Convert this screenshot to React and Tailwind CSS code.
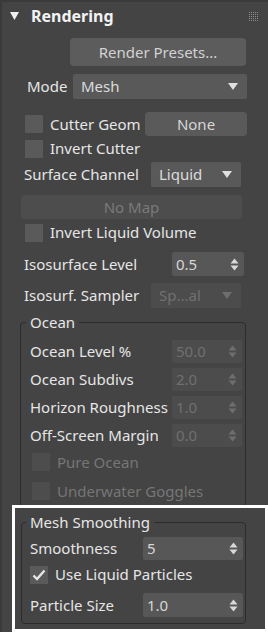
import React from "react";

const font = { fontFamily: '"Noto Sans", "Open Sans", sans-serif' };

function Checkbox({ checked, disabled }) {
  return (
    <div
      className={`w-[18px] h-[18px] shrink-0 flex items-center justify-center ${
        disabled ? "bg-[#4d4d4d]" : "bg-[#5a5a5a]"
      }`}
    >
      {checked && (
        <svg width="14" height="12" viewBox="0 0 14 12">
          <path d="M1.5 6.5 L5 10 L12.5 1.5" stroke="#e6e6e6" strokeWidth="2.4" fill="none" />
        </svg>
      )}
    </div>
  );
}

function Arrows({ disabled }) {
  const c = disabled ? "#6e6e6e" : "#d8d8d8";
  return (
    <svg width="9" height="13" viewBox="0 0 9 13" className="shrink-0">
      <polygon points="0.5,5.5 4.5,0.5 8.5,5.5" fill={c} />
      <polygon points="0.5,7.5 8.5,7.5 4.5,12.5" fill={c} />
    </svg>
  );
}

function Spinner({ value, disabled, className }) {
  return (
    <div
      className={`flex items-center justify-between pl-[4px] pr-[5px] rounded-[2px] ${
        disabled ? "bg-[#4c4c4c] text-[#707070]" : "bg-[#575757] text-[#d6d6d6]"
      } ${className}`}
    >
      <span className="text-[15px] leading-none">{value}</span>
      <Arrows disabled={disabled} />
    </div>
  );
}

function Dropdown({ value, disabled, className }) {
  return (
    <div
      className={`flex items-center justify-between pl-[8px] pr-[9px] rounded-[2px] ${
        disabled ? "bg-[#4c4c4c] text-[#707070]" : "bg-[#595959] text-[#dcdcdc]"
      } ${className}`}
    >
      <span className="text-[15px] leading-none">{value}</span>
      <svg width="10" height="8" viewBox="0 0 10 8">
        <polygon points="0,0 10,0 5,7" fill={disabled ? "#6e6e6e" : "#e0e0e0"} />
      </svg>
    </div>
  );
}

function Label({ children, disabled, className = "" }) {
  return (
    <span
      className={`text-[15px] leading-none whitespace-nowrap ${
        disabled ? "text-[#767676]" : "text-[#e6e6e6]"
      } ${className}`}
    >
      {children}
    </span>
  );
}

export default function App() {
  return (
    <div
      className="relative w-[268px] h-[632px] overflow-hidden bg-[#444444] border-t-2 border-l-2 border-[#3a3a3a]"
      style={font}
    >
      {/* Header */}
      <div className="h-[28px] flex items-center">
        <svg width="9" height="8" viewBox="0 0 9 8" className="ml-[8px]">
          <polygon points="0,0 9,0 4.5,8" fill="#f0f0f0" />
        </svg>
        <span className="ml-[12px] text-[16px] font-bold text-[#f2f2f2] leading-none">Rendering</span>
        <div className="ml-auto mr-[10px] grid grid-cols-5 gap-[1px]">
          {Array.from({ length: 25 }).map((_, i) => (
            <div key={i} className="w-[1px] h-[1px] bg-[#8c8c8c]" />
          ))}
        </div>
      </div>

      {/* Render Presets */}
      <div className="mt-[8px] ml-[68px] w-[176px] h-[28px] rounded-[4px] bg-[#5c5c5c] flex items-center justify-center">
        <span className="text-[15px] text-[#d2d2d2] leading-none">Render Presets...</span>
      </div>

      {/* Mode */}
      <div className="mt-[8px] h-[25px] flex items-center">
        <Label className="ml-[25px] w-[46px]">Mode</Label>
        <Dropdown value="Mesh" className="w-[174px] h-[25px]" />
      </div>

      {/* Cutter Geom */}
      <div className="mt-[13px] h-[24px] flex items-center">
        <div className="ml-[23px]">
          <Checkbox />
        </div>
        <Label className="ml-[7px] w-[95px]">Cutter Geom</Label>
        <div className="w-[102px] h-[24px] rounded-[4px] bg-[#5a5a5a] flex items-center justify-center">
          <span className="text-[15px] text-[#d6d6d6] leading-none">None</span>
        </div>
      </div>

      {/* Invert Cutter */}
      <div className="mt-[2px] h-[21px] flex items-center">
        <div className="ml-[23px]">
          <Checkbox />
        </div>
        <Label className="ml-[7px]">Invert Cutter</Label>
      </div>

      {/* Surface Channel */}
      <div className="mt-[3px] h-[25px] flex items-center">
        <Label className="ml-[22px] w-[127px]">Surface Channel</Label>
        <Dropdown value="Liquid" className="w-[90px] h-[25px]" />
      </div>

      {/* No Map */}
      <div className="mt-[8px] ml-[19px] w-[221px] h-[24px] rounded-[4px] bg-[#4d4d4d] flex items-center justify-center">
        <span className="text-[15px] text-[#7a7a7a] leading-none">No Map</span>
      </div>

      {/* Invert Liquid Volume */}
      <div className="mt-[2px] h-[23px] flex items-center">
        <div className="ml-[23px]">
          <Checkbox />
        </div>
        <Label className="ml-[7px]">Invert Liquid Volume</Label>
      </div>

      {/* Isosurface Level */}
      <div className="mt-[8px] h-[24px] flex items-center">
        <Label className="ml-[22px] w-[148px]">Isosurface Level</Label>
        <Spinner value="0.5" className="w-[72px] h-[24px]" />
      </div>

      {/* Isosurf. Sampler */}
      <div className="mt-[7px] h-[25px] flex items-center">
        <Label className="ml-[22px] w-[127px]">Isosurf. Sampler</Label>
        <Dropdown value="Sp...al" disabled className="w-[90px] h-[25px]" />
      </div>

      {/* Ocean group */}
      <fieldset className="mt-[4px] ml-[18px] w-[226px] border border-[#2c2c2c] rounded-[4px] pb-[3px]">
        <legend className="ml-[5px] px-[4px] h-[20px] flex items-center">
          <Label>Ocean</Label>
        </legend>
        <div className="mt-[8px] flex flex-col gap-[5px]">
          {[
            ["Ocean Level %", "50.0"],
            ["Ocean Subdivs", "2.0"],
            ["Horizon Roughness", "1.0"],
            ["Off-Screen Margin", "0.0"],
          ].map(([l, v]) => (
            <div key={l} className="h-[23px] flex items-center">
              <Label className="ml-[9px] w-[142px]">{l}</Label>
              <Spinner value={v} disabled className="w-[70px] h-[23px]" />
            </div>
          ))}
        </div>
        <div className="mt-[3px] h-[24px] flex items-center">
          <div className="ml-[11px]">
            <Checkbox disabled />
          </div>
          <Label disabled className="ml-[7px]">Pure Ocean</Label>
        </div>
        <div className="mt-[5px] h-[24px] flex items-center">
          <div className="ml-[11px]">
            <Checkbox disabled />
          </div>
          <Label disabled className="ml-[7px]">Underwater Goggles</Label>
        </div>
      </fieldset>

      {/* Mesh Smoothing group */}
      <fieldset className="mt-[5px] ml-[19px] w-[225px] border border-[#2c2c2c] rounded-[4px] pb-[6px]">
        <legend className="ml-[4px] px-[4px] h-[20px] flex items-center">
          <Label>Mesh Smoothing</Label>
        </legend>
        <div className="mt-[5px] h-[23px] flex items-center">
          <Label className="ml-[8px] w-[113px]">Smoothness</Label>
          <Spinner value="5" className="w-[100px] h-[23px]" />
        </div>
        <div className="mt-[3px] h-[23px] flex items-center">
          <div className="ml-[8px]">
            <Checkbox checked />
          </div>
          <Label className="ml-[7px]">Use Liquid Particles</Label>
        </div>
        <div className="mt-[7px] h-[24px] flex items-center">
          <Label className="ml-[8px] w-[113px]">Particle Size</Label>
          <Spinner value="1.0" className="w-[100px] h-[24px]" />
        </div>
      </fieldset>

      {/* Highlight box overlay */}
      <div className="absolute left-[10px] top-[503px] w-[256px] h-[127px] border-[3px] border-white pointer-events-none" />
    </div>
  );
}
